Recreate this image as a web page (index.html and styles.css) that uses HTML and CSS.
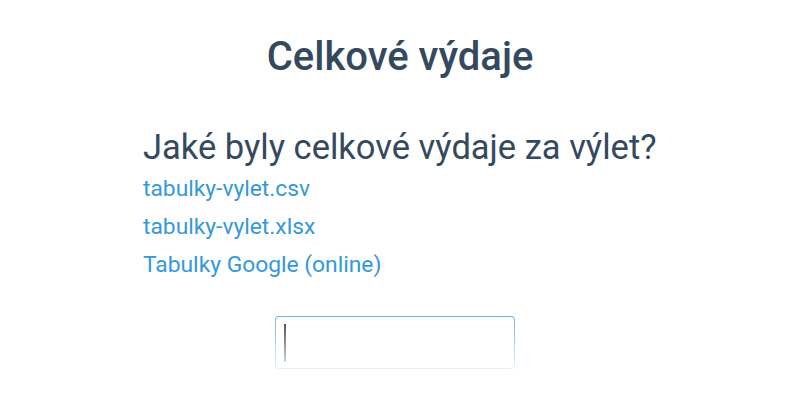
FILE: index.html
```html
<!DOCTYPE html>
<html lang="cs">
<head>
<meta charset="utf-8">
<title>Celkové výdaje</title>
<link rel="stylesheet" href="styles.css">
</head>
<body>
<main class="page">
  <h1 class="title">Celkové výdaje</h1>
  <section class="question">
    <h2 class="prompt">Jaké byly celkové výdaje za výlet?</h2>
    <ul class="links">
      <li><a href="#">tabulky-vylet.csv</a></li>
      <li><a href="#">tabulky-vylet.xlsx</a></li>
      <li><a href="#">Tabulky Google (online)</a></li>
    </ul>
    <div class="answer">
      <div class="field"><span class="caret"></span></div>
    </div>
  </section>
</main>
</body>
</html>
```
FILE: styles.css
```css
html, body {
  margin: 0;
  padding: 0;
  background: #ffffff;
}
body {
  font-family: Roboto, "Liberation Sans", sans-serif;
  color: #34495e;
}
.page {
  width: 514px;
  margin: 0 auto;
  padding-top: 33px;
}
.title {
  margin: 0;
  text-align: center;
  font-size: 40px;
  font-weight: 500;
  line-height: 47px;
  color: #34495e;
}
.question {
  margin-top: 47px;
}
.prompt {
  margin: 0;
  font-size: 34.5px;
  font-weight: 400;
  line-height: 40px;
  color: #34495e;
  white-space: nowrap;
}
.links {
  list-style: none;
  margin: 3px 0 0;
  padding: 0;
}
.links li {
  font-size: 22.8px;
  line-height: 38px;
}
.links a {
  color: #3498db;
  text-decoration: none;
}
.answer {
  margin-top: 32px;
  padding-left: 132px;
}
.field {
  width: 240px;
  height: 53px;
  box-sizing: border-box;
  border: 1px solid transparent;
  border-radius: 4px;
  background:
    linear-gradient(#ffffff, #ffffff) padding-box,
    linear-gradient(to bottom, #6cb2ea, #e6f2fc) border-box;
  padding: 7px 0 0 8px;
}
.caret {
  display: block;
  width: 2px;
  height: 38px;
  background: linear-gradient(to bottom, #50555c, #d0d3d8);
}
```
